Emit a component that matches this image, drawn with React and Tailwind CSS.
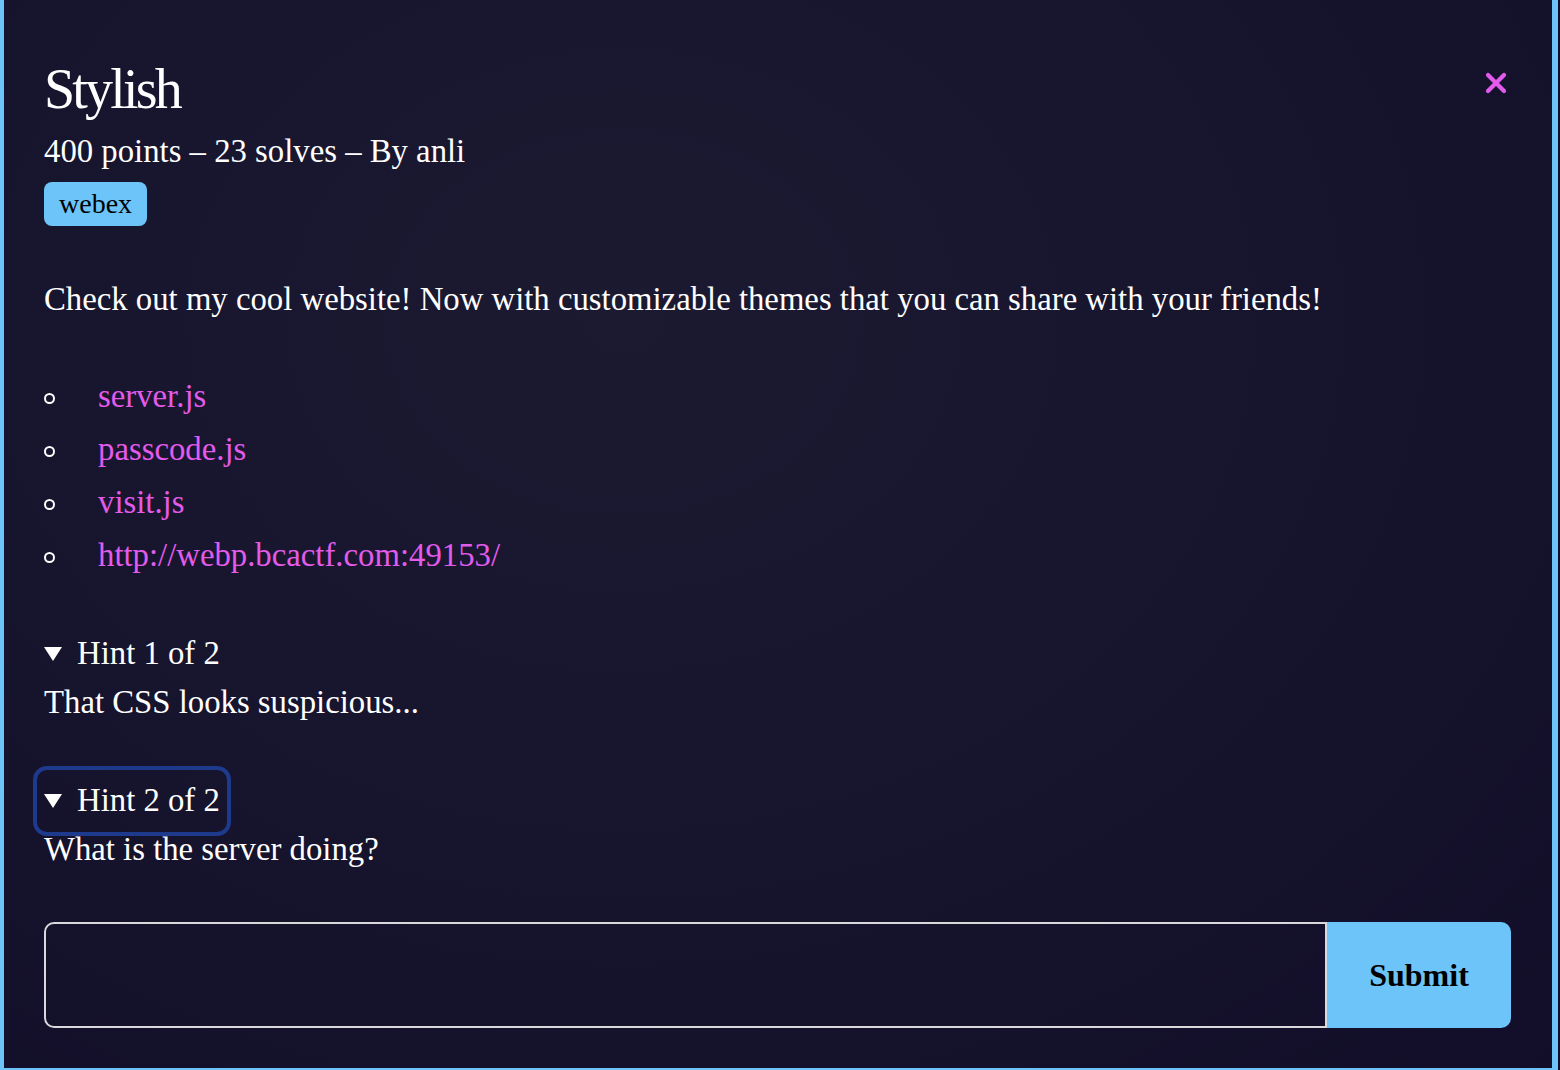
import { X } from 'lucide-react'

const files = ['server.js', 'passcode.js', 'visit.js', 'http://webp.bcactf.com:49153/']

function Caret() {
  return (
    <svg width="18" height="14" viewBox="0 0 18 14" className="mr-[15px] shrink-0">
      <polygon points="0,0 18,0 9,14" fill="white" />
    </svg>
  )
}

function Hint({ label, text, focused, className = '' }) {
  return (
    <div className={className}>
      <div
        className={`flex items-center w-fit h-[48px] ${
          focused ? 'outline-solid outline-4 outline-[#1e3a8c] outline-offset-[7px] rounded-[3px]' : ''
        }`}
      >
        <Caret />
        <span>{label}</span>
      </div>
      <p className="h-[48px] leading-[48px]">{text}</p>
    </div>
  )
}

export default function App() {
  return (
    <div className="w-[1560px] h-[1070px] bg-[#120e29] overflow-hidden font-['Liberation_Serif',serif] text-white">
      {/* modal panel, cut off by the viewport */}
      <div className="w-[1558px] h-[1070px] border-l-4 border-r-[6px] border-b-2 border-[#6cc4f8] bg-[radial-gradient(ellipse_at_40%_30%,#1c1a31_0%,#17142e_50%,#120e29_100%)] pl-10 pr-[41px] pt-[61px]">
        <div className="flex items-start justify-between">
          <h1 className="text-[56px] leading-[56px] tracking-tighter">Stylish</h1>
          <X size={32} strokeWidth={3.2} className="text-[#e25bea] mt-[6px] mr-[-1px]" />
        </div>

        <p className="text-[32.75px] leading-[40px] mt-[14px]">400 points – 23 solves – By anli</p>

        <span className="mt-[11px] inline-flex items-center h-[44px] px-[15px] rounded-lg bg-[#6cc4f8] text-black text-[28px]">
          webex
        </span>

        <p className="text-[32.75px] leading-[40px] mt-[53px]">
          Check out my cool website! Now with customizable themes that you can share with your friends!
        </p>

        <ul className="mt-[51px] text-[32.75px]">
          {files.map((f) => (
            <li key={f} className="flex items-center h-[53px]">
              <span className="w-[11px] h-[11px] rounded-full border-2 border-white mt-[4px] shrink-0" />
              <a className="ml-[43px] text-[#e25bea] leading-[53px]">{f}</a>
            </li>
          ))}
        </ul>

        <div className="text-[32.75px]">
          <Hint className="mt-[48px]" label="Hint 1 of 2" text="That CSS looks suspicious..." />
          <Hint className="mt-[51px]" label="Hint 2 of 2" text="What is the server doing?" focused />
        </div>

        <div className="flex mt-[49px] h-[106px]">
          <input className="flex-1 h-full border-2 border-[#d9d9d9] rounded-l-[10px] bg-transparent outline-none px-4 text-[32px]" />
          <button className="w-[184px] h-full bg-[#6cc4f8] rounded-r-[10px] text-black font-bold text-[32px]">
            Submit
          </button>
        </div>
      </div>
    </div>
  )
}
